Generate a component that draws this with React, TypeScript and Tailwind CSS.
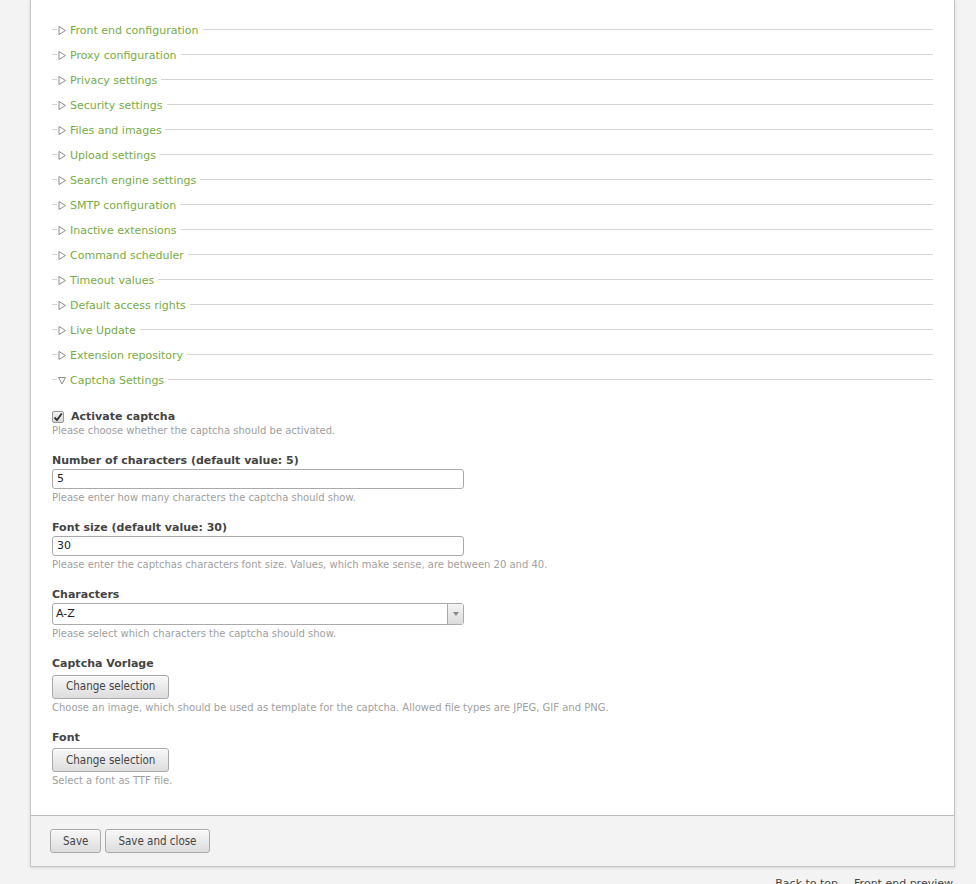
const legends = [
  "Front end configuration",
  "Proxy configuration",
  "Privacy settings",
  "Security settings",
  "Files and images",
  "Upload settings",
  "Search engine settings",
  "SMTP configuration",
  "Inactive extensions",
  "Command scheduler",
  "Timeout values",
  "Default access rights",
  "Live Update",
  "Extension repository",
];

function Legend({ label, open }: { label: string; open?: boolean }) {
  return (
    <div className="flex h-[25px] items-center">
      <span className="h-px w-[5px] bg-[#d4d4d4]" />
      <svg width="8" height="9" viewBox="0 0 8 9" className="mx-[1px] mt-[1px]">
        {open ? (
          <path d="M0.5 1.5 L7.5 1.5 L4 8 Z" fill="none" stroke="#8c8c8c" strokeWidth="1" />
        ) : (
          <path d="M1 0.5 L7.5 4.5 L1 8.5 Z" fill="none" stroke="#8c8c8c" strokeWidth="1" />
        )}
      </svg>
      <span className="pl-[3px] pr-[4px] pt-[3px] text-[11px] text-[#77ac45]">{label}</span>
      <span className="h-px flex-1 bg-[#d4d4d4]" />
    </div>
  );
}

function Btn({ children, wide }: { children: string; wide?: boolean }) {
  return (
    <button
      type="button"
      className={`h-[24px] rounded-[3px] border border-[#aaa] bg-gradient-to-b from-[#f8f8f8] to-[#dddddd] text-[11.5px] text-[#444] shadow-[inset_0_1px_0_#fff] ${
        wide ? "px-[13px]" : "px-[12px]"
      }`}
      style={{ fontFamily: '"DejaVu Sans Condensed", "DejaVu Sans", sans-serif' }}
    >
      {children}
    </button>
  );
}

function Field({
  label,
  desc,
  button,
  children,
}: {
  label: string;
  desc: string;
  button?: boolean;
  children: React.ReactNode;
}) {
  return (
    <div className="mt-[17px]">
      <div className="text-[11px] font-bold leading-[14px] text-[#444]">{label}</div>
      <div className={button ? "mt-[2px]" : "mt-[1px]"}>{children}</div>
      <div className="mt-[2px] text-[10px] leading-[13px] text-[#a0a0a0]">{desc}</div>
    </div>
  );
}

export default function App() {
  return (
    <div
      className="min-h-[920px] bg-[#f3f3f3]"
      style={{ fontFamily: '"DejaVu Sans", Verdana, sans-serif' }}
    >
      <div className="ml-[30px] w-[925px] border-x border-b border-[#c5c5c5] bg-white shadow-[0_1px_3px_rgba(0,0,0,0.12)]">
        <div className="px-[21px] pb-[28px] pt-[17px]">
          {legends.map((l) => (
            <Legend key={l} label={l} />
          ))}
          <Legend label="Captcha Settings" open />

          <div className="mt-[18px]">
            <label className="flex items-center text-[11px] font-bold leading-[14px] text-[#444]">
              <span className="mr-[7px] flex h-[12px] w-[12px] items-center justify-center rounded-[2px] border border-[#999] bg-gradient-to-b from-[#f2f2f2] to-[#d8d8d8]">
                <svg width="10" height="10" viewBox="0 0 10 10">
                  <path d="M1.5 5.5 L4 8 L8.8 1.5" fill="none" stroke="#333" strokeWidth="1.8" />
                </svg>
              </span>
              Activate captcha
            </label>
            <div className="text-[10px] leading-[13px] text-[#a0a0a0]">
              Please choose whether the captcha should be activated.
            </div>
          </div>

          <Field
            label="Number of characters (default value: 5)"
            desc="Please enter how many characters the captcha should show."
          >
            <div className="flex h-[20px] w-[412px] items-center rounded-[3px] border border-[#aaa] px-[4px] text-[11px] text-[#222]">
              5
            </div>
          </Field>

          <Field
            label="Font size (default value: 30)"
            desc="Please enter the captchas characters font size. Values, which make sense, are between 20 and 40."
          >
            <div className="flex h-[20px] w-[412px] items-center rounded-[3px] border border-[#aaa] px-[4px] text-[11px] text-[#222]">
              30
            </div>
          </Field>

          <Field
            label="Characters"
            desc="Please select which characters the captcha should show."
          >
            <div className="flex h-[22px] w-[412px] items-stretch rounded-[3px] border border-[#aaa] text-[11px] text-[#222]">
              <div className="flex flex-1 items-center px-[3px]">A-Z</div>
              <div className="flex w-[16px] items-center justify-center border-l border-[#aaa] bg-gradient-to-b from-[#f4f4f4] to-[#dcdcdc]">
                <svg width="6" height="4" viewBox="0 0 6 4">
                  <path d="M0 0 L6 0 L3 4 Z" fill="#888" />
                </svg>
              </div>
            </div>
          </Field>

          <Field
            label="Captcha Vorlage"
            desc="Choose an image, which should be used as template for the captcha. Allowed file types are JPEG, GIF and PNG."
            button
          >
            <Btn wide>Change selection</Btn>
          </Field>

          <Field label="Font" desc="Select a font as TTF file." button>
            <Btn wide>Change selection</Btn>
          </Field>
        </div>

        <div className="flex gap-[4px] border-t border-[#bbb] bg-[#f3f3f3] px-[19px] pb-[13px] pt-[13px]">
          <Btn>Save</Btn>
          <Btn>Save and close</Btn>
        </div>
      </div>

      <div className="mt-[9px] flex justify-end gap-[16px] pr-[23px] text-[11px] text-[#444]">
        <span>Back to top</span>
        <span>Front end preview</span>
      </div>
    </div>
  );
}
